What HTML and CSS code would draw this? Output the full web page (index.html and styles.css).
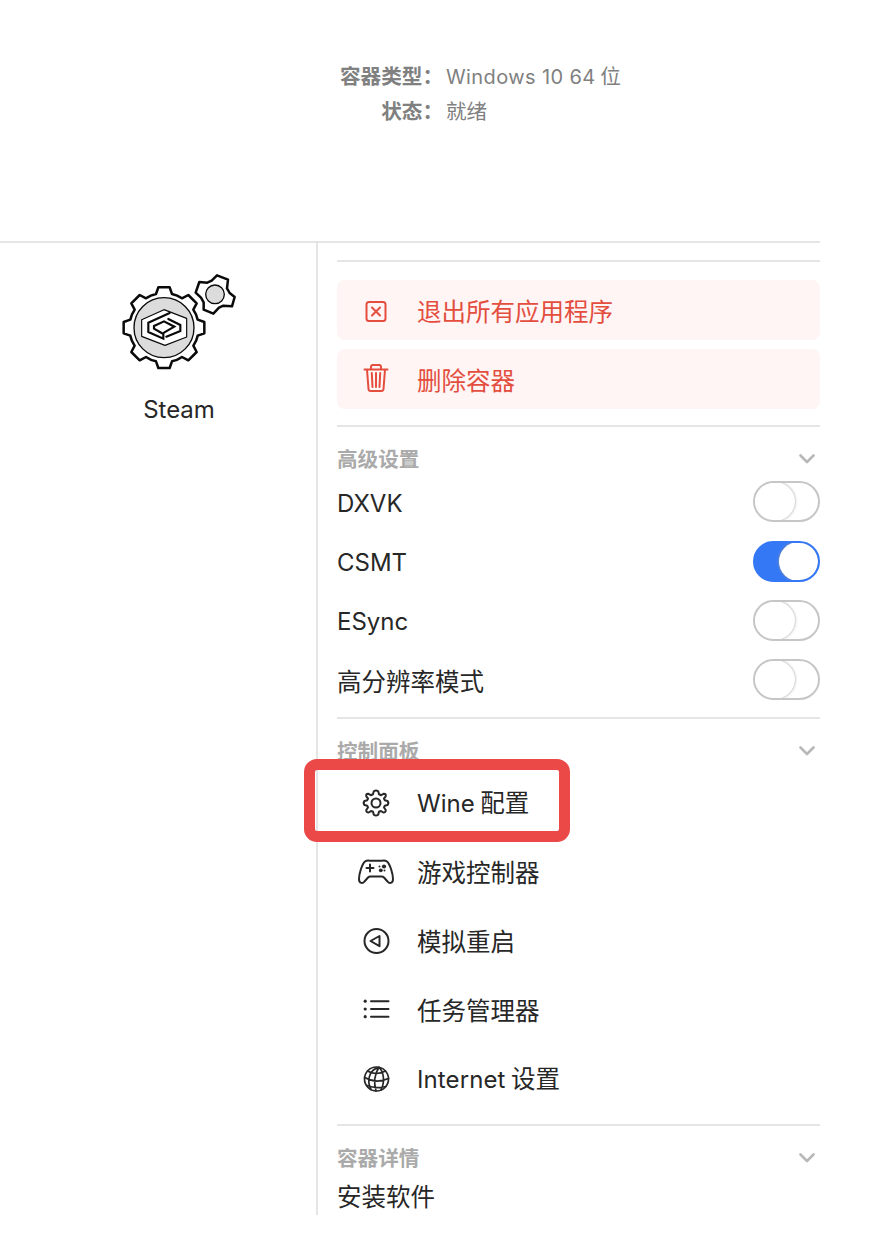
FILE: index.html
```html
<!DOCTYPE html>
<html lang="zh-CN">
<head>
<meta charset="utf-8">
<title>Steam</title>
<link rel="stylesheet" href="styles.css">
</head>
<body>
<div class="window">
  <header class="summary">
    <div class="summary-label">容器类型：</div><div class="summary-value"><span class="lat os">Windows 10 64</span> 位</div>
    <div class="summary-label">状态：</div><div class="summary-value">就绪</div>
  </header>
  <main class="content">
    <aside class="apps">
      <svg class="app-icon" viewBox="30 125 355 300" fill="none" stroke="#0a0a0a" stroke-linejoin="round" stroke-linecap="round">
        <g transform="translate(162 292)">
          <path stroke-width="7.500" fill="#fff" d="M-24-101-17-121H17L24-101Q40-98 54-88L73-98 98-73 88-54Q98-40 101-24L121-17V17L101 24Q98 40 88 54L98 73 73 98 54 88Q40 98 24 101L17 121H-17L-24 101Q-40 98-54 88L-73 98-98 73-88 54Q-98 40-101 24L-121 17V-17L-101-24Q-98-40-88-54L-98-73-73-98-54-88Q-40-98-24-101Z"/>
          <circle r="90" fill="#dcdcdc" stroke-width="4"/>
          <path fill="#fff" stroke-width="3.500" d="M0-54 68-28V28L3 53-67 26V-24Z"/>
          <path stroke-width="6.500" stroke-linejoin="miter" d="M17-44-47-15V13L-2 33V19L-30 3V-5L0-19 31-3 0 15M13-26 49-8V10L7 27"/>
        </g>
        <path stroke-width="7.500" fill="#fff" d="M321 135 354 148 351 174 359 188 374 200 366 228 340 226 327 232 310 250 281 238V216L273 202 257 187 268 155 292 157 305 151Z"/>
        <circle cx="315" cy="192" r="28" fill="#dcdcdc" stroke-width="4"/>
      </svg>
      <div class="app-name lat">Steam</div>
    </aside>
    <section class="panel">
      <div class="actions">
        <div class="action"><svg class="icon" viewBox="0 0 40 40"><rect x="10.500" y="11" width="19" height="19" rx="2.500"/><path d="m16 16.500 8 8m0-8-8 8"/></svg><span>退出所有应用程序</span></div>
        <div class="action"><svg class="icon" viewBox="0 0 40 40"><path d="M8.500 9.500h23M11 9.500l1.500 19.500q.2 2 2 2h11q1.800 0 2-2l1.500-19.500M15 9V7q0-2 2-2h6q2 0 2 2v2M20 13v14M15.800 13l.7 14M24.200 13l-.7 14"/></svg><span>删除容器</span></div>
      </div>
      <div class="group settings">
        <div class="group-title"><span>高级设置</span><svg class="chevron" viewBox="0 0 16 10"><path d="m1.500 1.500 6.500 6.500 6.500-6.500"/></svg></div>
        <div class="row"><span class="lat">DXVK</span><i class="toggle"></i></div>
        <div class="row"><span class="lat">CSMT</span><i class="toggle on"></i></div>
        <div class="row"><span class="lat">ESync</span><i class="toggle"></i></div>
        <div class="row"><span>高分辨率模式</span><i class="toggle"></i></div>
      </div>
      <div class="group control">
        <div class="group-title"><span>控制面板</span><svg class="chevron" viewBox="0 0 16 10"><path d="m1.500 1.500 6.500 6.500 6.500-6.500"/></svg></div>
        <div class="item"><svg class="icon" viewBox="0 0 40 40"><circle cx="20" cy="20" r="4.500"/><path d="M17.800 8.300Q20 6.700 22.200 8.300L23 11.300 25.200 12.200 27.900 10.700Q30.300 10.800 29.700 13.400L28 15.500 28.700 17.200 31.500 18Q33.200 20 31.500 22L28.700 22.800 28 24.500 29.700 27Q30 29.500 27.300 29.500L25 28 23 28.700 22.200 31.700Q20 33.300 17.800 31.700L17 28.700 15 28 12.700 29.500Q10 29.500 10.300 27L12 24.500 11.300 22.800 8.500 22Q6.800 20 8.500 18L11.300 17.200 12 15.500 10.300 13.400Q9.700 10.800 12.100 10.700L14.800 12.200 17 11.300Z"/></svg><span><span class="lat">Wine</span> 配置</span></div>
        <div class="item"><svg class="icon" viewBox="0 0 40 40"><path d="M9 9.500Q11 8 14 8.700H26Q29 8 31 9.500C34 12 37 22 37 27 37 32 33 31.500 31.500 29.500L28 25.500Q27 24.500 25.500 24.500H14.500Q13 24.500 12 25.500L8.500 29.500C7 31.500 3 32 3 27 3 22 6 12 9 9.500ZM14 12.500V19.500M10.500 16H17.500"/><g fill="currentColor" stroke="none"><circle cx="28" cy="14.500" r="2.100"/><circle cx="24.800" cy="18.300" r="1.900"/><circle cx="23.500" cy="14.500" r="1"/><circle cx="28.500" cy="18.500" r="1"/></g></svg><span>游戏控制器</span></div>
        <div class="item"><svg class="icon" viewBox="0 0 40 40"><circle cx="20.500" cy="20" r="12"/><path d="M14.500 20 23.500 15V25.200Z"/></svg><span>模拟重启</span></div>
        <div class="item"><svg class="icon" viewBox="0 0 40 40"><path d="M15 11.200H32.500M15 19H32.500M15 26.700H32.500"/><g fill="currentColor" stroke="none"><circle cx="9.200" cy="11.200" r="1.600"/><circle cx="9.200" cy="19" r="1.600"/><circle cx="9.200" cy="26.700" r="1.600"/></g></svg><span>任务管理器</span></div>
        <div class="item"><svg class="icon thin" viewBox="0 0 40 40"><circle cx="20.500" cy="20" r="12"/><path d="M23 8.300C12 11 11 23 15 30.500M23 8.300C18 16 18 25 20 32M23 8.300C28 13 29 23 25 31M11.500 12Q20 17 29.500 12M8.700 18.500Q20 25 32.500 19.500M11 26.500Q20 30 30 27.500"/></svg><span><span class="lat net">Internet</span> 设置</span></div>
      </div>
      <div class="group details">
        <div class="group-title"><span>容器详情</span><svg class="chevron" viewBox="0 0 16 10"><path d="m1.500 1.500 6.500 6.500 6.500-6.500"/></svg></div>
        <div class="install">安装软件</div>
      </div>
    </section>
  </main>
  <div class="highlight"></div>
</div>
</body>
</html>
```
FILE: styles.css
```css
* { box-sizing: border-box; }
body {
  margin: 0;
  background: #fff;
  color: #272727;
  font: 24.5px/36px "Noto Sans CJK SC", sans-serif;
}
.window { position: relative; width: 820px; height: 1215px; }
.lat { font-family: Inter, sans-serif; font-size: 24px; }
.summary {
  height: 243px;
  padding-top: 57px;
  border-bottom: 2px solid #e5e5e5;
  display: grid;
  grid-template-columns: 443px 1fr;
  grid-auto-rows: 35px;
  align-content: start;
  column-gap: 3px;
  font-size: 20.600px;
  color: #808080;
  white-space: nowrap;
}
.summary-label { text-align: right; font-weight: 700; }
.summary .os { font-size: 20px; letter-spacing: 0.400px; }
.content { display: flex; height: 972px; }
.apps {
  width: 318px;
  border-right: 2px solid #e5e5e5;
  padding: 29px 0 0 120px;
}
.app-icon { display: block; width: 118.333px; height: 100px; }
.app-name { width: 118px; text-align: center; margin-top: 20px; }
.panel { flex: 1; padding: 17px 0 0 19px; }
.actions {
  height: 165px;
  border-top: 2px solid #e5e5e5;
  padding-top: 18px;
  display: flex;
  flex-direction: column;
  gap: 9.500px;
  color: #e34e3f;
}
.action, .item { display: flex; align-items: center; gap: 21px; padding-left: 19px; white-space: nowrap; }
.action { height: 59.500px; border-radius: 8px; background: #fef5f4; padding-top: 2px; }
.icon {
  width: 40px;
  height: 40px;
  flex: none;
  fill: none;
  stroke: currentColor;
  stroke-width: 2;
  stroke-linecap: round;
  stroke-linejoin: round;
}
.thin { stroke-width: 1.700; }
.group { border-top: 2px solid #e5e5e5; }
.group-title {
  display: flex;
  align-items: center;
  justify-content: space-between;
  height: 45px;
  padding: 16px 5px 0 0;
  color: #aaa;
  font-size: 20.600px;
  font-weight: 700;
}
.chevron { width: 16px; height: 10px; margin-top: 2px; fill: none; stroke: #b8b8b8; stroke-width: 2.600; stroke-linecap: round; stroke-linejoin: round; }
.settings { height: 292px; }
.row { display: flex; align-items: center; justify-content: space-between; height: 59.400px; }
.row > span { padding-top: 2px; }
.row > .lat { padding-top: 4px; }
.toggle {
  position: relative;
  width: 67px;
  height: 41px;
  border: 2px solid #c6c6c6;
  border-radius: 21px;
  overflow: hidden;
}
.toggle::before {
  content: "";
  position: absolute;
  left: -1px;
  top: -1px;
  width: 41px;
  height: 39px;
  border-radius: 50%;
  background: #fff;
  box-shadow: 0 0 3px #999;
}
.toggle.on { background: #3478f6; border-color: #3478f6; }
.toggle.on::before { left: 24px; width: 39px; height: 39px; }
.control { height: 407px; }
.control .group-title { margin-bottom: 5px; }
.item { height: 68.800px; }
.net { letter-spacing: 0.100px; }
.install { line-height: 50px; height: 44px; }
.highlight {
  position: absolute;
  left: 304px;
  top: 759px;
  width: 266px;
  height: 83px;
  border: 11px solid #eb4848;
  border-radius: 13px;
}
```
